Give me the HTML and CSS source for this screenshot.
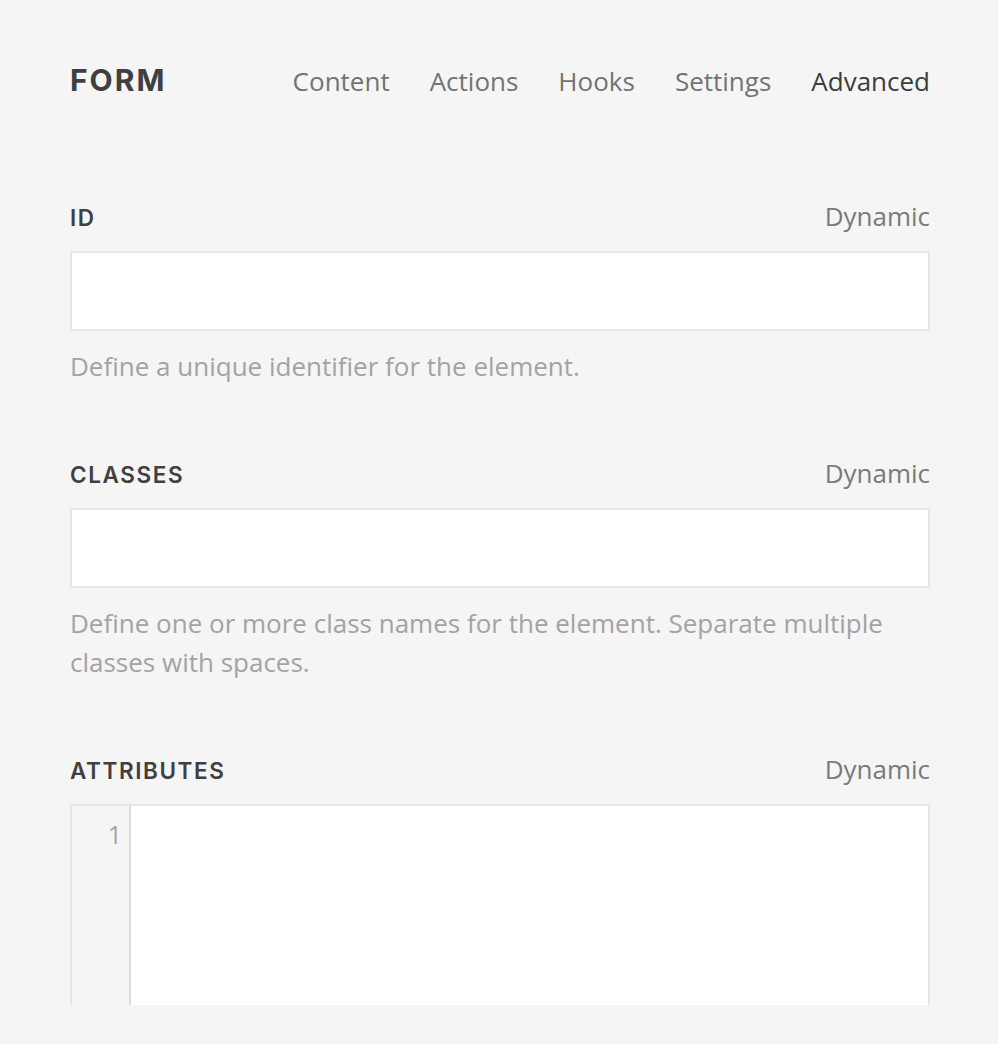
FILE: index.html
```html
<!DOCTYPE html>
<html lang="en">
<head>
<meta charset="utf-8">
<title>Form - Advanced</title>
<link rel="stylesheet" href="styles.css">
</head>
<body>
<div class="panel">
  <header class="head">
    <h1 class="title">FORM</h1>
    <nav class="tabs">
      <span class="tab">Content</span>
      <span class="tab">Actions</span>
      <span class="tab">Hooks</span>
      <span class="tab">Settings</span>
      <span class="tab active">Advanced</span>
    </nav>
  </header>

  <section class="field">
    <div class="field-top">
      <label class="label">ID</label>
      <span class="dynamic">Dynamic</span>
    </div>
    <div class="input"></div>
    <p class="desc">Define a unique identifier for the element.</p>
  </section>

  <section class="field">
    <div class="field-top">
      <label class="label">CLASSES</label>
      <span class="dynamic">Dynamic</span>
    </div>
    <div class="input"></div>
    <p class="desc">Define one or more class names for the element. Separate multiple classes with spaces.</p>
  </section>

  <section class="field last">
    <div class="field-top">
      <label class="label">ATTRIBUTES</label>
      <span class="dynamic">Dynamic</span>
    </div>
    <div class="editor">
      <div class="gutter"><span class="ln">1</span></div>
      <div class="code"></div>
    </div>
  </section>
</div>
</body>
</html>
```

FILE: styles.css
```css
* { box-sizing: border-box; }
html, body {
  margin: 0;
  padding: 0;
  background: #f5f5f5;
}
body {
  font-family: "Open Sans", "Liberation Sans", sans-serif;
  height: 1044px;
  overflow: hidden;
}
.panel {
  padding: 58px 68px 0 70px;
  height: 1005px;
  overflow: hidden;
}
.head {
  display: flex;
  align-items: baseline;
  justify-content: space-between;
  height: 70px;
}
.title {
  margin: 0;
  font-family: Inter, "Liberation Sans", sans-serif;
  font-weight: 700;
  font-size: 30px;
  letter-spacing: 2px;
  color: #404040;
  line-height: 44px;
}
.tabs {
  display: flex;
  gap: 40px;
}
.tab {
  font-size: 26px;
  color: #737373;
  line-height: 44px;
}
.tab.active { color: #3c3c3c; }

.field {
  padding-top: 72px;
}
.field:first-of-type {
  padding-top: 73px;
}
.field-top {
  display: flex;
  justify-content: space-between;
  align-items: baseline;
  height: 50px;
}
.label {
  font-family: Inter, "Liberation Sans", sans-serif;
  font-weight: 600;
  font-size: 22.5px;
  letter-spacing: 1.6px;
  color: #404040;
  line-height: 30px;
}
.dynamic {
  font-size: 26px;
  color: #7a7a7a;
  line-height: 30px;
}
.input {
  height: 80px;
  background: #fff;
  border: 2px solid #e6e6e6;
}
.desc {
  margin: 16px 0 0;
  font-size: 26px;
  line-height: 39px;
  color: #a3a3a3;
}
.editor {
  display: flex;
  height: 320px;
  border: 2px solid #e6e6e6;
  background: #fff;
}
.gutter {
  width: 59px;
  background: #f5f5f5;
  border-right: 2px solid #dcdcdc;
  text-align: right;
  padding: 12px 7px 0 0;
}
.ln {
  font-size: 25px;
  color: #a3a3a3;
  line-height: 32px;
}
.code { flex: 1; }
```
